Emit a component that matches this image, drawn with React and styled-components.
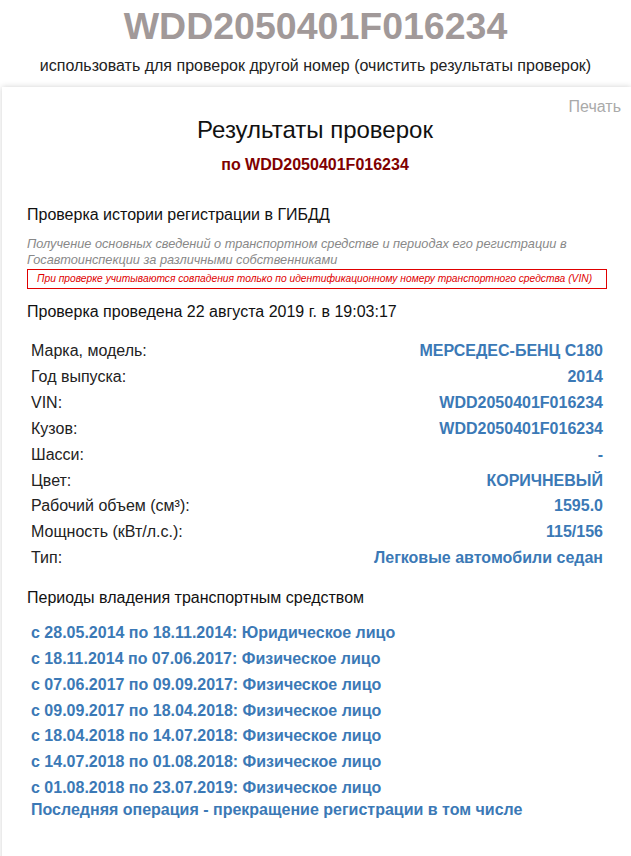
import React from "react";
import styled, { createGlobalStyle } from "styled-components";

const VIN = "WDD2050401F016234";

const specs = [
  ["Марка, модель:", "МЕРСЕДЕС-БЕНЦ С180"],
  ["Год выпуска:", "2014"],
  ["VIN:", VIN],
  ["Кузов:", VIN],
  ["Шасси:", "-"],
  ["Цвет:", "КОРИЧНЕВЫЙ"],
  ["Рабочий объем (см³):", "1595.0"],
  ["Мощность (кВт/л.с.):", "115/156"],
  ["Тип:", "Легковые автомобили седан"],
];

const periods = [
  "с 28.05.2014 по 18.11.2014: Юридическое лицо",
  "с 18.11.2014 по 07.06.2017: Физическое лицо",
  "с 07.06.2017 по 09.09.2017: Физическое лицо",
  "с 09.09.2017 по 18.04.2018: Физическое лицо",
  "с 18.04.2018 по 14.07.2018: Физическое лицо",
  "с 14.07.2018 по 01.08.2018: Физическое лицо",
  "с 01.08.2018 по 23.07.2019: Физическое лицо",
];

const GlobalStyle = createGlobalStyle`
  html, body {
    margin: 0;
    padding: 0;
    background: #fff;
    overflow-x: hidden;
  }
  body {
    font-family: "Liberation Sans", Arial, sans-serif;
    color: #222;
  }
`;

const Header = styled.header`
  text-align: center;
`;

const VinTitle = styled.h1`
  margin: 4px 0 0;
  font-size: 37.5px;
  line-height: 44px;
  font-weight: 700;
  color: #a19999;
`;

const ClearLink = styled.a`
  display: block;
  margin-top: 8px;
  font-size: 16px;
  line-height: 20px;
  color: #222;
  text-decoration: none;
  cursor: pointer;
`;

const Card = styled.section`
  margin: 11px 0 0 2px;
  padding: 0 28px 40px 25px;
  background: #fff;
  box-shadow: 0 0 6px rgba(0, 0, 0, 0.18);
  min-height: 740px;
`;

const PrintLink = styled.a`
  display: block;
  margin: 0 -18px 0 0;
  padding-top: 10px;
  text-align: right;
  font-size: 16px;
  line-height: 20px;
  color: #aaa;
  cursor: pointer;
`;

const CardTitle = styled.h2`
  margin: -1px 0 0;
  text-align: center;
  font-size: 24px;
  line-height: 28px;
  font-weight: 400;
  color: #111;
`;

const CardSubtitle = styled.div`
  margin-top: 11px;
  text-align: center;
  font-size: 16px;
  line-height: 20px;
  font-weight: 700;
  color: #800000;
`;

const SectionTitle = styled.h3`
  margin: ${(p) => p.$top}px 0 0;
  font-size: 16px;
  line-height: 20px;
  font-weight: 400;
  color: #111;
`;

const Description = styled.p`
  margin: 11px 0 0;
  font-size: 12.75px;
  line-height: 16px;
  font-style: italic;
  color: #888;
`;

const Notice = styled.div`
  margin: 1px -4px 0 0;
  padding: 0 9px;
  border: 1px solid #e00000;
  font-size: 10.25px;
  line-height: 18px;
  font-style: italic;
  color: #e00000;
  white-space: nowrap;
`;

const CheckedAt = styled.div`
  margin-top: 13px;
  font-size: 16px;
  line-height: 20px;
  color: #111;
`;

const SpecList = styled.dl`
  margin: 16px 0 0;
  padding-left: 4px;
`;

const SpecRow = styled.div`
  display: flex;
  justify-content: space-between;
  align-items: baseline;
  font-size: 16px;
  line-height: 25.9px;
`;

const SpecLabel = styled.dt`
  margin: 0;
  color: #222;
`;

const SpecValue = styled.dd`
  margin: 0;
  font-weight: 700;
  color: #3b79b6;
  text-align: right;
`;

const PeriodList = styled.ul`
  margin: 12px 0 0;
  padding: 0 0 0 4px;
  list-style: none;
`;

const Period = styled.li`
  font-size: 16px;
  line-height: 25.83px;
  font-weight: 700;
  color: #3b79b6;
`;

const LastOperation = styled.div`
  padding-left: 4px;
  margin-top: 1px;
  font-size: 16px;
  line-height: 16px;
  font-weight: 700;
  color: #3b79b6;
`;

export default function App() {
  return (
    <>
      <GlobalStyle />
      <Header>
        <VinTitle>{VIN}</VinTitle>
        <ClearLink>
          использовать для проверок другой номер (очистить результаты проверок)
        </ClearLink>
      </Header>
      <Card>
        <PrintLink>Печать</PrintLink>
        <CardTitle>Результаты проверок</CardTitle>
        <CardSubtitle>по {VIN}</CardSubtitle>

        <SectionTitle $top={30}>Проверка истории регистрации в ГИБДД</SectionTitle>
        <Description>
          Получение основных сведений о транспортном средстве и периодах его
          регистрации в Госавтоинспекции за различными собственниками
        </Description>
        <Notice>
          При проверке учитываются совпадения только по идентификационному номеру
          транспортного средства (VIN)
        </Notice>
        <CheckedAt>Проверка проведена 22 августа 2019 г. в 19:03:17</CheckedAt>

        <SpecList>
          {specs.map(([label, value]) => (
            <SpecRow key={label}>
              <SpecLabel>{label}</SpecLabel>
              <SpecValue>{value}</SpecValue>
            </SpecRow>
          ))}
        </SpecList>

        <SectionTitle $top={17}>Периоды владения транспортным средством</SectionTitle>
        <PeriodList>
          {periods.map((p) => (
            <Period key={p}>{p}</Period>
          ))}
        </PeriodList>
        <LastOperation>
          Последняя операция - прекращение регистрации в том числе
        </LastOperation>
      </Card>
    </>
  );
}
